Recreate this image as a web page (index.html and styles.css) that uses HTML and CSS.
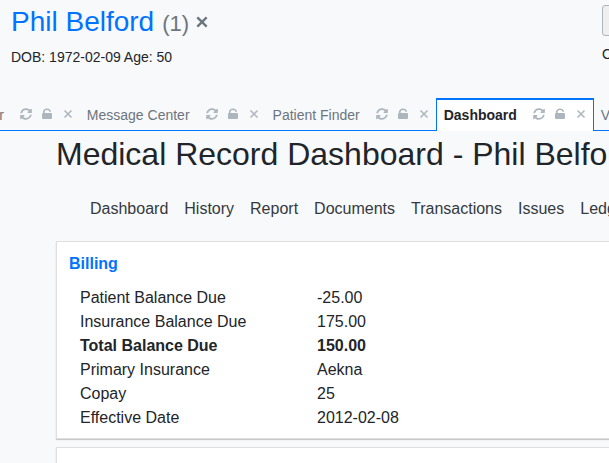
FILE: index.html
```html
<!DOCTYPE html>
<html lang="en">
<head>
<meta charset="utf-8">
<title>Medical Record Dashboard</title>
<link rel="stylesheet" href="styles.css">
</head>
<body>
<svg class="sprite" aria-hidden="true">
  <symbol id="refresh" viewBox="0 0 512 512"><path d="M370.7 133.3C339.5 104 298.900 88 255.800 88c-77.500.1-144.300 53.200-162.800 126.900-1.300 5.400-6.100 9.100-11.700 9.100H24.100c-7.500 0-13.200-6.800-11.800-14.200C33.900 94.900 134.800 8 256 8c66.400 0 126.800 26.100 171.300 68.700L463 41c15.100-15.100 41-4.400 41 17v134c0 13.300-10.700 24-24 24H346c-21.400 0-32.100-25.900-17-41l41.700-41.700zM32 296h134c21.400 0 32.100 25.900 17 41l-41.800 41.800c31.300 29.300 71.800 45.300 114.900 45.200 77.400-.1 144.300-53.100 162.800-126.800 1.300-5.400 6.100-9.200 11.700-9.200h57.300c7.500 0 13.200 6.800 11.800 14.200C478.100 417.100 377.200 504 256 504c-66.400 0-126.800-26.100-171.300-68.700L49 471c-15.100 15.100-41 4.400-41-17V320c0-13.300 10.700-24 24-24z"/></symbol>
  <symbol id="unlock" viewBox="0 0 12 12"><path d="M2 5V3.800C2 1.800 3.700.4 6 .4s4 1.400 4 3.400H8.400C8.400 2.600 7.400 1.900 6 1.900S3.600 2.700 3.600 3.900V5H10a1 1 0 0 1 1 1v4a1 1 0 0 1-1 1H2a1 1 0 0 1-1-1V6a1 1 0 0 1 1-1z"/></symbol>
  <symbol id="close" viewBox="0 0 12 12"><path d="M2 2l8 8M10 2l-8 8" fill="none" stroke="currentColor" stroke-width="2"/></symbol>
  <symbol id="close-tab" viewBox="0 0 12 12"><path d="M2.500 2.500l7 7M9.500 2.500l-7 7" fill="none" stroke="currentColor" stroke-width="1.500"/></symbol>
</svg>
<header class="patient-bar">
  <div class="patient">
    <div class="patient-name">
      <a href="#">Phil Belford</a><span class="patient-id">(1)</span>
      <button class="clear" aria-label="Close patient"><svg><use href="#close"/></svg></button>
    </div>
    <div class="patient-info">DOB: 1972-02-09 Age: 50</div>
  </div>
  <div class="encounter">
    <button class="encounter-button">Select Encounter</button>
    <div class="patient-info">Open Encounter:</div>
  </div>
</header>
<nav class="tabs" aria-label="Open tabs">
  <div class="tab"><a href="#">Calendar</a><button aria-label="Refresh"><svg><use href="#refresh"/></svg></button><button aria-label="Lock"><svg><use href="#unlock"/></svg></button><button aria-label="Close"><svg><use href="#close-tab"/></svg></button></div>
  <div class="tab"><a href="#">Message Center</a><button aria-label="Refresh"><svg><use href="#refresh"/></svg></button><button aria-label="Lock"><svg><use href="#unlock"/></svg></button><button aria-label="Close"><svg><use href="#close-tab"/></svg></button></div>
  <div class="tab"><a href="#">Patient Finder</a><button aria-label="Refresh"><svg><use href="#refresh"/></svg></button><button aria-label="Lock"><svg><use href="#unlock"/></svg></button><button aria-label="Close"><svg><use href="#close-tab"/></svg></button></div>
  <div class="tab active"><a href="#">Dashboard</a><button aria-label="Refresh"><svg><use href="#refresh"/></svg></button><button aria-label="Lock"><svg><use href="#unlock"/></svg></button><button aria-label="Close"><svg><use href="#close-tab"/></svg></button></div>
  <div class="tab"><a href="#">Visit History</a></div>
</nav>
<main class="record">
  <h1>Medical Record Dashboard - Phil Belford</h1>
  <nav class="record-nav" aria-label="Record">
    <a href="#">Dashboard</a><a href="#">History</a><a href="#">Report</a><a href="#">Documents</a><a href="#">Transactions</a><a href="#">Issues</a><a href="#">Ledger</a>
  </nav>
  <section class="card">
    <h2><a href="#">Billing</a></h2>
    <table>
      <tr><th scope="row">Patient Balance Due</th><td>-25.00</td></tr>
      <tr><th scope="row">Insurance Balance Due</th><td>175.00</td></tr>
      <tr class="total"><th scope="row">Total Balance Due</th><td>150.00</td></tr>
      <tr><th scope="row">Primary Insurance</th><td>Aekna</td></tr>
      <tr><th scope="row">Copay</th><td>25</td></tr>
      <tr><th scope="row">Effective Date</th><td>2012-02-08</td></tr>
    </table>
  </section>
  <section class="card"></section>
</main>
</body>
</html>
```
FILE: styles.css
```css
* { box-sizing: border-box; }
html { overflow: hidden; }
body {
  margin: 0;
  background: #f8f9fb;
  color: #212529;
  font: 16px/24px "Liberation Sans", Arial, sans-serif;
  white-space: nowrap;
}
a { color: inherit; text-decoration: none; }
button { font: inherit; color: inherit; margin: 0; padding: 0; border: 0; background: none; }
svg { display: block; fill: currentColor; }
.sprite { display: none; }

.patient-bar { display: grid; grid-template-columns: 1fr 7px; padding: 5px 0 17px 11px; }
.patient-name { display: flex; align-items: baseline; height: 34px; line-height: 34px; font-size: 28px; }
.patient-name a { color: #0073ff; }
.patient-id { margin-left: 8px; font-size: 22px; color: #6c757d; }
.clear { align-self: center; margin-left: 6px; color: #6c757d; }
.clear svg { width: 14px; height: 14px; }
.patient-info { margin-top: 6px; font-size: 14px; }
.patient .patient-info { height: 36px; }
.encounter-button { height: 31px; padding: 0 12px; border: 1px solid #adb5bd; border-radius: 3px; background: #efefef; display: block; }

.tabs { display: flex; height: 33px; overflow: hidden; box-shadow: inset 0 -1px #0073ff; }
.tab {
  display: flex;
  flex: none;
  align-items: center;
  padding: 0 6px 0 7px;
  color: #6c757d;
  font-size: 14px;
}
.tab:first-child { margin-left: -60px; }
.tab button { width: 12px; margin-left: 9px; padding-bottom: 2px; color: #adb5bd; }
.tab a + button { margin-left: 16px; }
.tab svg { width: 12px; height: 12px; }
.tab.active { background: #fff; border: 1px solid #0073ff; border-width: 2px 1px 0; padding-bottom: 2px; }
.active a { color: #212529; font-weight: bold; }

.record { padding-left: 56px; }
h1 { margin: 0; font-size: 32px; line-height: 40px; padding-top: 3px; font-weight: normal; }
.record-nav { display: flex; gap: 16px; padding: 23px 0 20px 34px; color: #343a40; }
.card { min-height: 100px; margin-bottom: 8px; padding: 10px 12px 8px; border: 1px solid #dfdfdf; border-right: 0; background: #fff; box-shadow: 0 1px 1px #c8c8c8; }
h2 { margin: 0 0 10px; font-size: 16px; line-height: 24px; color: #0073ff; }
table { margin-left: 11px; border-collapse: collapse; }
th, td { padding: 0; text-align: left; font-weight: normal; }
th { width: 237px; }
.total th, .total td { font-weight: bold; }
```
